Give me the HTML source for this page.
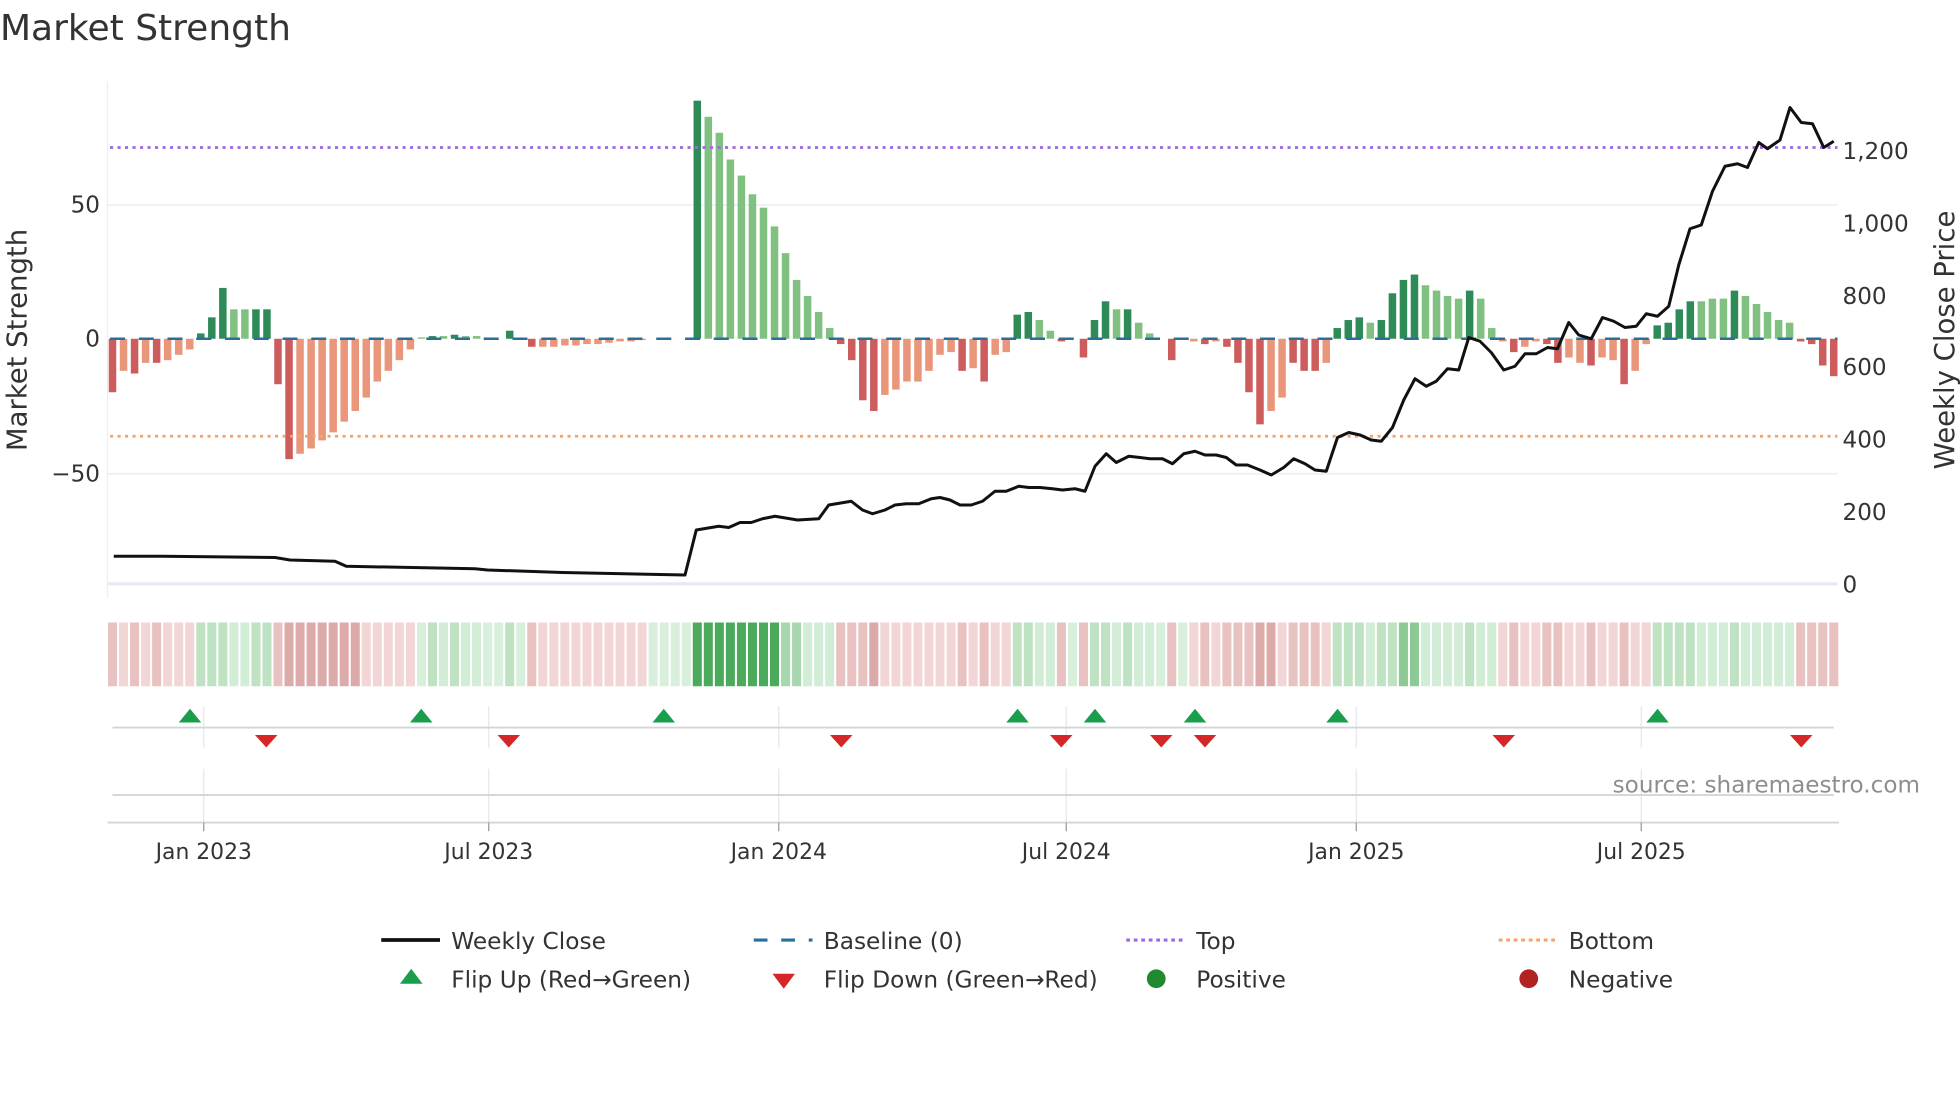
<!DOCTYPE html>
<html><head><meta charset="utf-8"><style>
html,body{margin:0;padding:0;background:#fff;width:1960px;height:1102px;overflow:hidden}
svg{display:block}
text{font-family:"DejaVu Sans","Liberation Sans",sans-serif;fill:#333}
</style></head><body>
<svg id="s" width="1960" height="1102" viewBox="0 0 1568 881.6" xmlns="http://www.w3.org/2000/svg">
<text x="0" y="32" font-size="28.8" fill="#333">Market Strength</text>
<line x1="86" y1="164" x2="1470" y2="164" stroke="#eef0f4" stroke-width="1.5"/>
<line x1="86" y1="379" x2="1470" y2="379" stroke="#eef0f4" stroke-width="1.5"/>
<line x1="86" y1="467" x2="1470" y2="467" stroke="#e6e9f2" stroke-width="2.5"/>
<line x1="86" y1="65" x2="86" y2="478" stroke="#eceef3" stroke-width="1"/>
<g font-size="18.5" text-anchor="end">
<text x="80" y="170">50</text><text x="80" y="277">0</text><text x="80" y="385">−50</text>
</g>
<g font-size="18.5">
<text x="1474" y="127">1,200</text><text x="1474" y="185">1,000</text><text x="1474" y="243">800</text>
<text x="1474" y="300">600</text><text x="1474" y="358">400</text><text x="1474" y="416">200</text><text x="1474" y="474">0</text>
</g>
<text transform="translate(21,272) rotate(-90)" font-size="22" text-anchor="middle">Market Strength</text>
<text transform="translate(1563,272) rotate(-90)" font-size="22" text-anchor="middle">Weekly Close Price</text>
<g id="bars"></g>
<line x1="88" y1="271" x2="1470" y2="271" stroke="#2a6f97" stroke-width="2" stroke-dasharray="12,11"/>
<line x1="88" y1="118" x2="1470" y2="118" stroke="#a366e0" stroke-width="2.2" stroke-dasharray="2.5,3.5"/>
<line x1="88" y1="349" x2="1470" y2="349" stroke="#f4a36a" stroke-width="2.2" stroke-dasharray="2.5,3.5"/>
<polyline id="price" fill="none" stroke="#111" stroke-width="2.4" stroke-linejoin="round"/>
<g id="heat"></g>
<g stroke="#e4e7ee" stroke-width="1">
<line x1="163" y1="565" x2="163" y2="598"/><line x1="391" y1="565" x2="391" y2="598"/><line x1="623" y1="565" x2="623" y2="598"/><line x1="853" y1="565" x2="853" y2="598"/><line x1="1085" y1="565" x2="1085" y2="598"/><line x1="1313" y1="565" x2="1313" y2="598"/>
<line x1="163" y1="615" x2="163" y2="658"/><line x1="391" y1="615" x2="391" y2="658"/><line x1="623" y1="615" x2="623" y2="658"/><line x1="853" y1="615" x2="853" y2="658"/><line x1="1085" y1="615" x2="1085" y2="658"/><line x1="1313" y1="615" x2="1313" y2="658"/>
</g>
<line x1="90" y1="582" x2="1467" y2="582" stroke="#d2d5da" stroke-width="1.5"/>
<line x1="90" y1="636" x2="1467" y2="636" stroke="#d2d5da" stroke-width="1.5"/>
<line x1="86" y1="658" x2="1471" y2="658" stroke="#d2d5da" stroke-width="1.5"/>
<g stroke="#999" stroke-width="1">
<line x1="163" y1="658" x2="163" y2="665"/><line x1="391" y1="658" x2="391" y2="665"/><line x1="623" y1="658" x2="623" y2="665"/><line x1="853" y1="658" x2="853" y2="665"/><line x1="1085" y1="658" x2="1085" y2="665"/><line x1="1313" y1="658" x2="1313" y2="665"/>
</g>
<g id="tri"></g>
<text x="1536" y="634" font-size="18.5" text-anchor="end" style="fill:#8e8e8e">source: sharemaestro.com</text>
<g font-size="17.5" text-anchor="middle">
<text x="163" y="687">Jan 2023</text><text x="391" y="687">Jul 2023</text><text x="623" y="687">Jan 2024</text><text x="853" y="687">Jul 2024</text><text x="1085" y="687">Jan 2025</text><text x="1313" y="687">Jul 2025</text>
</g>
<g font-size="18.6">
<line x1="305" y1="752" x2="352" y2="752" stroke="#111" stroke-width="3"/>
<text x="361" y="759">Weekly Close</text>
<line x1="603" y1="752" x2="650" y2="752" stroke="#2a6f97" stroke-width="2.5" stroke-dasharray="11,11"/>
<text x="659" y="759">Baseline (0)</text>
<line x1="901" y1="752" x2="948" y2="752" stroke="#a366e0" stroke-width="2.5" stroke-dasharray="3,3"/>
<text x="957" y="759">Top</text>
<line x1="1199" y1="752" x2="1246" y2="752" stroke="#f4a36a" stroke-width="2.5" stroke-dasharray="3,3"/>
<text x="1255" y="759">Bottom</text>
<polygon points="320,787 338,787 329,775" fill="#1a9e4c"/>
<text x="361" y="790">Flip Up (Red→Green)</text>
<polygon points="618,779 636,779 627,791" fill="#d62728"/>
<text x="659" y="790">Flip Down (Green→Red)</text>
<circle cx="925" cy="783" r="7.5" fill="#1f8a2e"/>
<text x="957" y="790">Positive</text>
<circle cx="1223" cy="783" r="7.5" fill="#b22222"/>
<text x="1255" y="790">Negative</text>
</g>
</svg>
<script>
var NS="http://www.w3.org/2000/svg";
function el(t,a,p){var e=document.createElementNS(NS,t);for(var k in a)e.setAttribute(k,a[k]);p.appendChild(e);return e;}
var d=[[-20,1],[-12,0],[-13,1],[-9,0],[-9,1],[-8,0],[-6,0],[-4,0],
[2,1],[8,1],[19,1],[11,0],[11,0],[11,1],[11,1],
[-17,1],[-45,1],[-43,0],[-41,0],[-38,0],[-35,0],[-31,0],[-27,0],[-22,0],[-16,0],[-12,0],[-8,0],[-4,0],
[0.5,0],[1,1],[1,0],[1.5,1],[1,0],[1,0],[0.5,0],[0,0],[3,1],[0,0],
[-3,1],[-3,0],[-3,0],[-2.5,0],[-2.5,0],[-2,0],[-2,0],[-1.5,0],[-1,0],[-1,0],[-0.5,0],[0,0],[0,0],[0,0],[0,0],
[89,1],[83,0],[77,0],[67,0],[61,0],[54,0],[49,0],[42,0],[32,0],[22,0],[16,0],[10,0],[4,0],
[-2,1],[-8,1],[-23,1],[-27,1],[-21,0],[-19,0],[-16,0],[-16,0],[-12,0],[-6,0],[-5,0],[-12,1],[-11,0],[-16,1],[-6,0],[-5,0],
[9,1],[10,1],[7,0],[3,0],[-1,1],[0,0],[-7,1],[7,1],[14,1],[11,0],[11,1],[6,0],[2,0],[0,0],[-8,1],[0,0],[-1,0],[-2,1],[-1,0],
[-3,1],[-9,1],[-20,1],[-32,1],[-27,0],[-22,0],[-9,1],[-12,1],[-12,1],[-9,0],
[4,1],[7,1],[8,1],[6,0],[7,1],[17,1],[22,1],[24,1],[20,0],[18,0],[16,0],[15,0],[18,1],[15,0],[4,0],
[-1,0],[-5,1],[-3,0],[-1,0],[-2,1],[-9,1],[-7,0],[-9,0],[-10,1],[-7,0],[-8,0],[-17,1],[-12,0],[-2,0],
[5,1],[6,1],[11,1],[14,1],[14,0],[15,0],[15,0],[18,1],[16,0],[13,0],[10,0],[7,0],[6,0],
[-1,1],[-2,1],[-10,1],[-14,1]];
var n=d.length, x0=90, x1=1467, step=(x1-x0)/(n-1);
var bars=document.getElementById("bars"),heat=document.getElementById("heat");
d.forEach(function(b,i){
 var x=x0+i*step, v=b[0], h=Math.abs(v)*2.14;
 var c=v>=0?(b[1]?"#2e8b57":"#80c080"):(b[1]?"#cd5c5c":"#e9967a");
 if(h>0.3) el("rect",{x:x-3,y:v>=0?271-h:271,width:6,height:h,fill:c},bars);
 var hc;
 if(v>=0){hc=v>40?"#4caa5c":v>20?(b[1]?"#8cc995":"#a8d7ad"):(b[1]?"#bfe2c3":"#d2edd5");if(v<1)hc="#d8efdc";}
 else{hc=v<-25?"#dcaaa9":(b[1]?"#e8c2c1":"#f1d6d5");}
 el("rect",{x:x-step/2+0.8,y:498,width:step-1.6,height:51,fill:hc},heat);
});
var pts="91,445 130,445 220,446 232,448 268,449 277,453 380,455 390,456 450,458 548,460 557,424 575,421 583,422 592,418 601,418 610,415 620,413 638,416 655,415 663,404 681,401 690,408 698,411 708,408 716,404 725,403 735,403 745,399 752,398 760,400 768,404 777,404 786,401 796,393 805,393 815,389 823,390 832,390 842,391 850,392 860,391 868,393 876,373 885,363 893,370 903,365 912,366 920,367 930,367 938,371 947,363 956,361 964,364 973,364 981,366 989,372 998,372 1008,376 1017,380 1027,374 1035,367 1044,371 1052,376 1061,377 1070,350 1079,346 1088,348 1097,352 1105,353 1114,342 1123,320 1132,303 1141,309 1149,305 1158,295 1167,296 1175,270 1184,273 1193,282 1203,296 1212,293 1220,283 1229,283 1238,278 1246,279 1255,258 1263,268 1273,271 1282,254 1291,257 1300,262 1309,261 1317,251 1326,253 1335,245 1343,212 1352,183 1361,180 1370,153 1380,133 1390,131 1398,134 1407,114 1414,119 1424,112 1432,86 1441,98 1450,99 1459,118 1467,113";
document.getElementById("price").setAttribute("points",pts);
var tri=document.getElementById("tri");
[152,337,531,814,876,956,1070,1326].forEach(function(x){el("polygon",{points:(x-9)+",578 "+(x+9)+",578 "+x+",567",fill:"#1a9e4c"},tri);});
[213,407,673,849,929,964,1203,1441].forEach(function(x){el("polygon",{points:(x-9)+",588 "+(x+9)+",588 "+x+",598",fill:"#d62728"},tri);});
</script>
</body></html>
